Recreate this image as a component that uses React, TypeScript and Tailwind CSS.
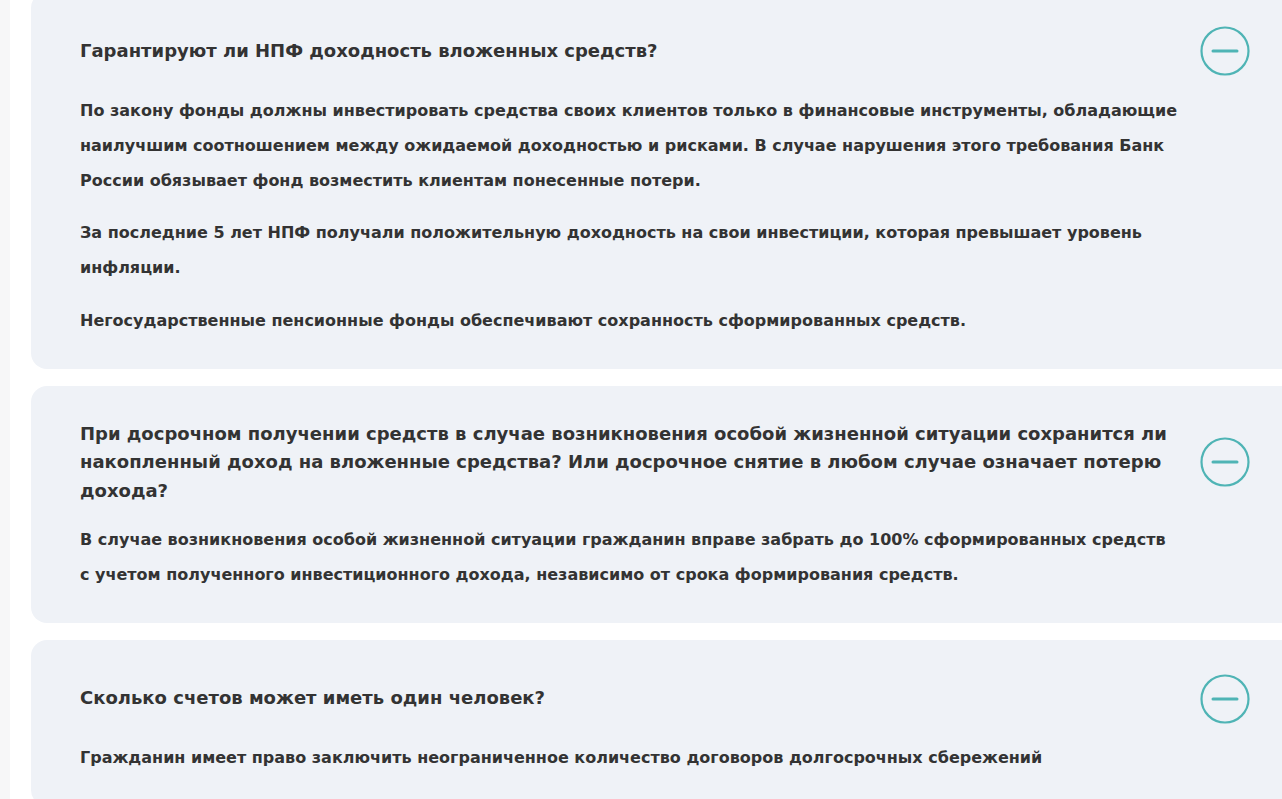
const faqs = [
  {
    q: 'Гарантируют ли НПФ доходность вложенных средств?',
    a: [
      'По закону фонды должны инвестировать средства своих клиентов только в финансовые инструменты, обладающие наилучшим соотношением между ожидаемой доходностью и рисками. В случае нарушения этого требования Банк России обязывает фонд возместить клиентам понесенные потери.',
      'За последние 5 лет НПФ получали положительную доходность на свои инвестиции, которая превышает уровень инфляции.',
      'Негосударственные пенсионные фонды обеспечивают сохранность сформированных средств.',
    ],
  },
  {
    q: 'При досрочном получении средств в случае возникновения особой жизненной ситуации сохранится ли накопленный доход на вложенные средства? Или досрочное снятие в любом случае означает потерю дохода?',
    a: [
      'В случае возникновения особой жизненной ситуации гражданин вправе забрать до 100% сформированных средств с учетом полученного инвестиционного дохода, независимо от срока формирования средств.',
    ],
  },
  {
    q: 'Сколько счетов может иметь один человек?',
    a: ['Гражданин имеет право заключить неограниченное количество договоров долгосрочных сбережений'],
  },
];

function MinusCircle() {
  return (
    <svg width="50" height="50" viewBox="0 0 50 50" fill="none" className="shrink-0">
      <circle cx="25" cy="25" r="23.5" stroke="#4fb4b5" strokeWidth="2.2" />
      <line x1="13" y1="25" x2="37" y2="25" stroke="#4fb4b5" strokeWidth="3" strokeLinecap="round" />
    </svg>
  );
}

export default function App() {
  return (
    <div
      className="flex h-[799px] w-[1282px] overflow-hidden bg-white text-[#333]"
      style={{ fontFamily: '"DejaVu Sans", sans-serif' }}
    >
      <div className="w-[10px] shrink-0 bg-[#f7f7f8]" />
      <div className="-mt-2 flex w-[1290px] shrink-0 flex-col gap-[17px] pl-[21px]">
        {faqs.map((f) => (
          <div key={f.q} className="rounded-2xl bg-[#eff2f7] pb-[31px] pl-[49px] pr-[50px] pt-[34px]">
            <div className="flex items-center gap-5">
              <h3 className="w-[1100px] text-[18px] font-bold leading-[28.5px] text-[#333]">{f.q}</h3>
              <MinusCircle />
            </div>
            <div className="mt-[16.5px] flex w-[1100px] flex-col gap-[17.5px]">
              {f.a.map((p) => (
                <p key={p} className="text-[16px] font-bold leading-[35px] text-[#333]">
                  {p}
                </p>
              ))}
            </div>
          </div>
        ))}
      </div>
    </div>
  );
}
